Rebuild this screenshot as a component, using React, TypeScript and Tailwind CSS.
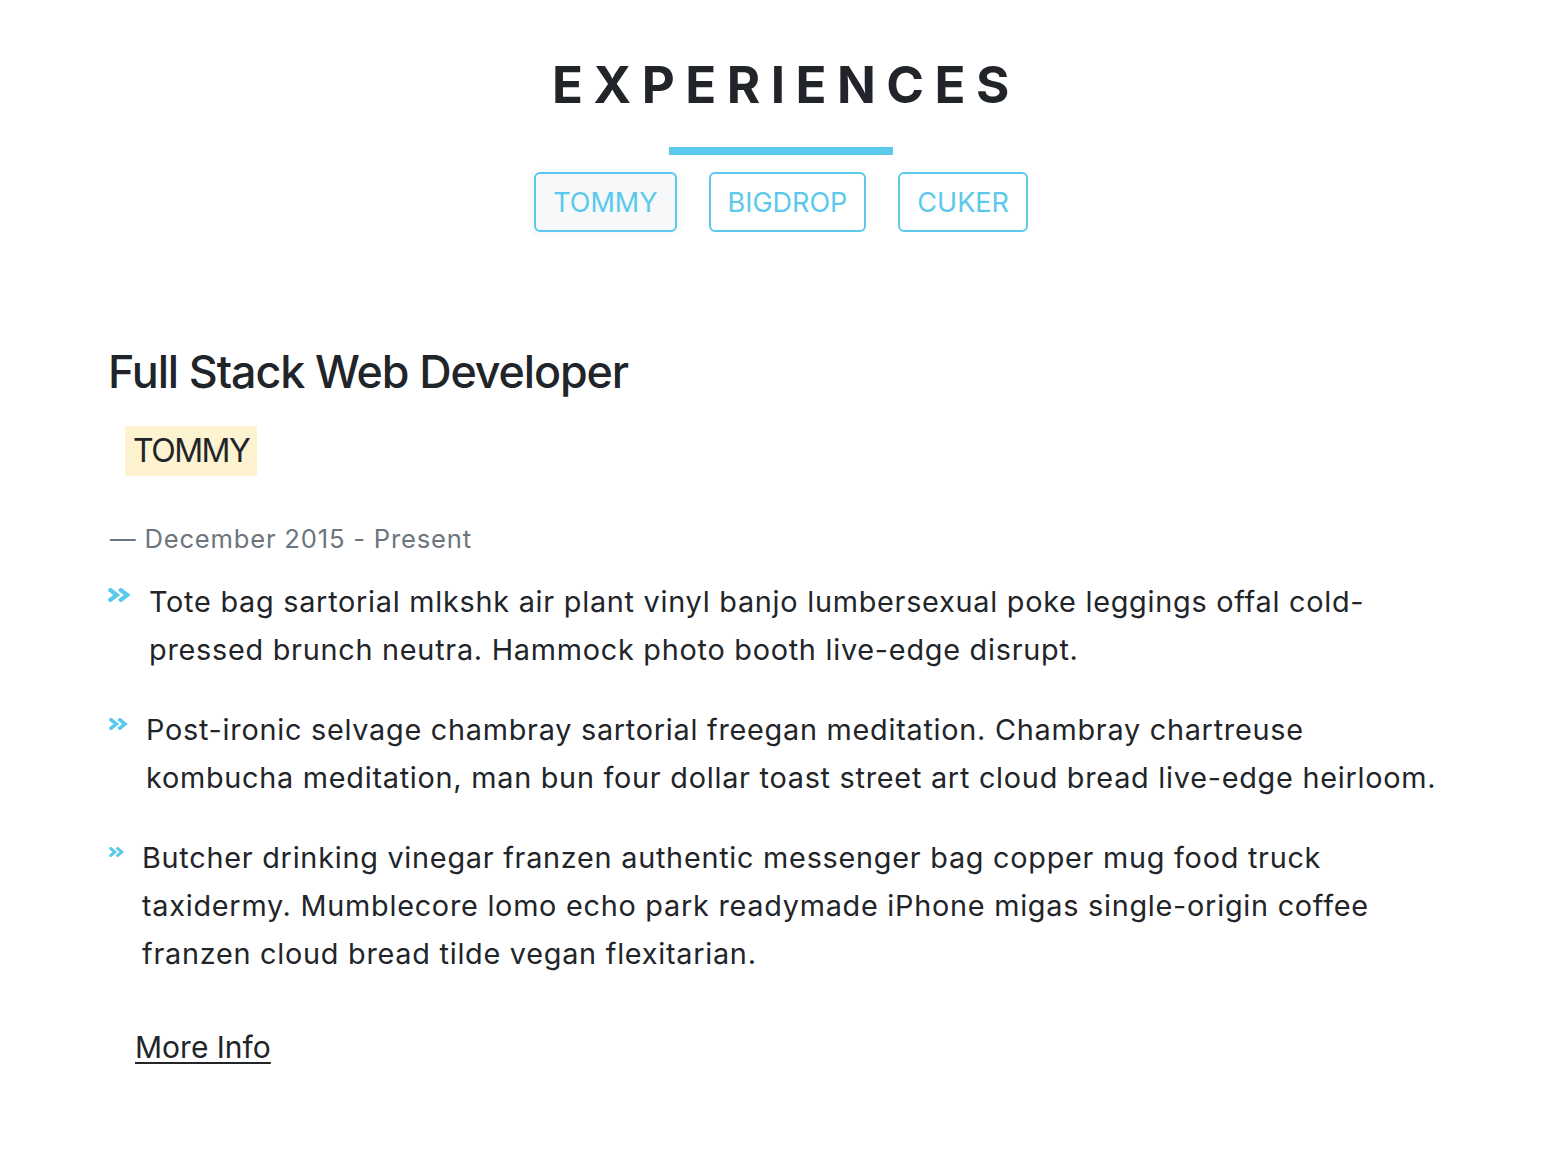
import React from "react";

const TABS = ["TOMMY", "BIGDROP", "CUKER"];

const POINTS = [
  {
    text: "Tote bag sartorial mlkshk air plant vinyl banjo lumbersexual poke leggings offal cold-pressed brunch neutra. Hammock photo booth live-edge disrupt.",
    box: "w-[41px] pt-[10px]",
    icon: "w-[24px] h-[14px]",
  },
  {
    text: "Post-ironic selvage chambray sartorial freegan meditation. Chambray chartreuse kombucha meditation, man bun four dollar toast street art cloud bread live-edge heirloom.",
    box: "w-[38px] pt-[12px] pl-[1px]",
    icon: "w-[20px] h-[12px]",
  },
  {
    text: "Butcher drinking vinegar franzen authentic messenger bag copper mug food truck taxidermy. Mumblecore lomo echo park readymade iPhone migas single-origin coffee franzen cloud bread tilde vegan flexitarian.",
    box: "w-[34px] pt-[13px] pl-[1px]",
    icon: "w-[16px] h-[10px]",
  },
];

function Chevrons({ className }: { className: string }) {
  return (
    <svg viewBox="0 0 23 13" className={className} fill="none" preserveAspectRatio="none">
      <path
        d="M2.4 2 L8.4 6.5 L2.4 11 M12.4 2 L18.4 6.5 L12.4 11"
        stroke="#5bc9ec"
        strokeWidth="4"
        strokeLinecap="square"
        strokeLinejoin="miter"
      />
    </svg>
  );
}

export default function App() {
  return (
    <div
      className="min-h-screen bg-white text-[#212529]"
      style={{ fontFamily: "Inter, 'Noto Sans', sans-serif" }}
    >
      {/* header */}
      <div className="flex flex-col items-center pt-[55px] pl-[5px]">
        <h1 className="text-[51px] leading-[60px] font-bold tracking-[10.5px] pl-[10px]">
          EXPERIENCES
        </h1>
        <div className="mt-[32px] w-[224px] h-[8px] bg-[#5bc9ec]" />
        <div className="mt-[17px] flex gap-[32px]">
          {TABS.map((t, i) => (
            <button
              key={t}
              className={`h-[60px] px-[17px] border-2 border-[#5bc9ec] rounded-[6px] text-[27px] leading-none text-[#5bc9ec] ${
                i === 0 ? "bg-[#f6f8fa] shadow-[0_0_0_5px_#fafbfc]" : "bg-white"
              }`}
            >
              {t}
            </button>
          ))}
        </div>
      </div>

      {/* job */}
      <div className="pl-[108px] pr-[104px] pt-[113px] pb-[80px]">
        <h2 className="text-[44.8px] leading-[54px] font-medium tracking-[-1.1px]">
          Full Stack Web Developer
        </h2>
        <div className="mt-[27px] ml-[17px]">
          <span className="inline-block bg-[#fdf3d1] px-[8px] text-[32px] leading-[50px] tracking-[-1.5px]">
            TOMMY
          </span>
        </div>
        <p className="mt-[44px] ml-[2px] text-[25.6px] leading-[38px] tracking-[0.8px] text-[#6c757d]">
          — December 2015 - Present
        </p>
        <ul className="mt-[20px] flex flex-col gap-[32px]">
          {POINTS.map((p) => (
            <li key={p.text} className="flex">
              <span className={`shrink-0 ${p.box}`}>
                <Chevrons className={`block ${p.icon}`} />
              </span>
              <span className="text-[28.8px] leading-[48px] tracking-[0.75px]">{p.text}</span>
            </li>
          ))}
        </ul>
        <a
          href="#"
          className="inline-block mt-[49px] ml-[27px] text-[30px] leading-[40px] text-[#212529] underline decoration-[2px] underline-offset-[4px]"
        >
          More Info
        </a>
      </div>
    </div>
  );
}
